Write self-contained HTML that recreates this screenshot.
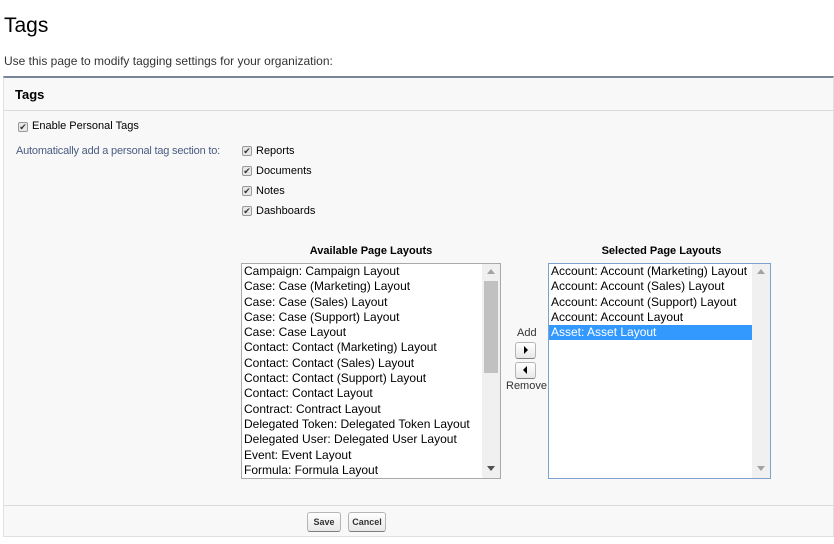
<!DOCTYPE html>
<html><head><style>
*{margin:0;padding:0;box-sizing:border-box}
body{width:834px;height:544px;background:#fff;font-family:"Liberation Sans",Arial,sans-serif;color:#000;position:relative;overflow:hidden}
.a{position:absolute;white-space:nowrap}
.cb{position:absolute;width:10px;height:10px;border:1px solid #999;border-radius:2px;background:#e8e8e8;font-size:9px;line-height:8px;text-align:center;color:#333}
.lb{position:absolute;background:#fff;font-size:12px;overflow:hidden}
.lb div{height:15.3px;line-height:15px;padding-left:2px;color:#000}
.btn{position:absolute;border:1px solid #b5b5b5;border-bottom-color:#7f7f7f;border-radius:3px;background:linear-gradient(#fff,#e8e8e8);font-size:9px;font-weight:bold;text-align:center;color:#333}
</style></head><body>
<div class="a" style="left:4px;top:14px;font-size:21px;color:#000">Tags</div>
<div class="a" style="left:4px;top:54px;font-size:12px;color:#333">Use this page to modify tagging settings for your organization:</div>
<div class="a" style="left:3px;top:76px;width:831px;height:461px;background:#f8f8f8;border:1px solid #e0e0e0;border-top:2px solid #7a8499"></div>
<div class="a" style="left:4px;top:110px;width:830px;height:1px;background:#dcdcdc"></div>
<div class="a" style="left:15px;top:87px;font-size:13px;font-weight:bold;color:#000">Tags</div>
<div class="cb" style="left:18px;top:122px">✔</div>
<div class="a" style="left:32px;top:120px;font-size:11px;color:#000">Enable Personal Tags</div>
<div class="a" style="left:16px;top:145px;font-size:11px;color:#4a5c82;letter-spacing:-0.2px">Automatically add a personal tag section to:</div>
<div class="cb" style="left:242px;top:146px">✔</div><div class="a" style="left:256px;top:145px;font-size:11px">Reports</div>
<div class="cb" style="left:242px;top:166px">✔</div><div class="a" style="left:256px;top:165px;font-size:11px">Documents</div>
<div class="cb" style="left:242px;top:186px">✔</div><div class="a" style="left:256px;top:185px;font-size:11px">Notes</div>
<div class="cb" style="left:242px;top:206px">✔</div><div class="a" style="left:256px;top:205px;font-size:11px">Dashboards</div>
<div class="a" style="left:241px;top:245px;width:260px;text-align:center;font-size:11px;font-weight:bold">Available Page Layouts</div>
<div class="a" style="left:548px;top:245px;width:227px;text-align:center;font-size:11px;font-weight:bold">Selected Page Layouts</div>
<div class="lb" style="left:241px;top:263px;width:260px;height:216px;border:1px solid #a9a9a9">
<div>Campaign: Campaign Layout</div><div>Case: Case (Marketing) Layout</div><div>Case: Case (Sales) Layout</div><div>Case: Case (Support) Layout</div><div>Case: Case Layout</div><div>Contact: Contact (Marketing) Layout</div><div>Contact: Contact (Sales) Layout</div><div>Contact: Contact (Support) Layout</div><div>Contact: Contact Layout</div><div>Contract: Contract Layout</div><div>Delegated Token: Delegated Token Layout</div><div>Delegated User: Delegated User Layout</div><div>Event: Event Layout</div><div>Formula: Formula Layout</div>
</div>
<div class="a" style="left:482px;top:264px;width:18px;height:214px;background:#f0f0f0"></div>
<div class="a" style="left:484px;top:281px;width:14px;height:92px;background:#c1c1c1"></div>
<div class="a" style="left:487px;top:269px;width:0;height:0;border-left:4px solid transparent;border-right:4px solid transparent;border-bottom:5px solid #a3a3a3"></div>
<div class="a" style="left:487px;top:466px;width:0;height:0;border-left:4px solid transparent;border-right:4px solid transparent;border-top:5px solid #505050"></div>
<div class="lb" style="left:548px;top:263px;width:223px;height:216px;border:1px solid #7da2ce">
<div>Account: Account (Marketing) Layout</div><div>Account: Account (Sales) Layout</div><div>Account: Account (Support) Layout</div><div>Account: Account Layout</div><div style="background:#3399ff;color:#fff;width:203px">Asset: Asset Layout</div>
</div>
<div class="a" style="left:752px;top:264px;width:18px;height:214px;background:#f0f0f0"></div>
<div class="a" style="left:757px;top:269px;width:0;height:0;border-left:4px solid transparent;border-right:4px solid transparent;border-bottom:5px solid #a3a3a3"></div>
<div class="a" style="left:757px;top:466px;width:0;height:0;border-left:4px solid transparent;border-right:4px solid transparent;border-top:5px solid #a3a3a3"></div>
<div class="a" style="left:517px;top:327px;font-size:11px;color:#333">Add</div>
<div class="btn" style="left:515px;top:342px;width:21px;height:17px"></div>
<div class="a" style="left:524px;top:346px;width:0;height:0;border-top:4px solid transparent;border-bottom:4px solid transparent;border-left:4px solid #000"></div>
<div class="btn" style="left:515px;top:362px;width:21px;height:17px"></div>
<div class="a" style="left:523px;top:366px;width:0;height:0;border-top:4px solid transparent;border-bottom:4px solid transparent;border-right:4px solid #000"></div>
<div class="a" style="left:506px;top:380px;font-size:11px;color:#333">Remove</div>
<div class="a" style="left:4px;top:505px;width:830px;height:1px;background:#dcdcdc"></div>
<div class="btn" style="left:307px;top:512px;width:34px;height:20px;line-height:18px">Save</div>
<div class="btn" style="left:348px;top:512px;width:38px;height:20px;line-height:18px">Cancel</div>
</body></html>
